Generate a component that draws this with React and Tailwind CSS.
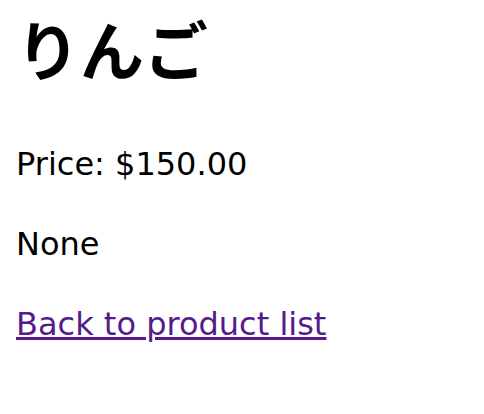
export default function App() {
  return (
    <div className="px-4 font-['DejaVu_Sans',sans-serif] text-black bg-white min-h-screen">
      <h1 className="text-[64px] leading-[94px] font-bold font-['Noto_Sans_CJK_JP','DejaVu_Sans',sans-serif]">
        りんご
      </h1>
      <div className="mt-[46px] flex flex-col gap-8 text-[32px] leading-[48px]">
        <p>Price: $150.00</p>
        <p>None</p>
        <p>
          <a href="#" className="text-[#551a8b] underline">
            Back to product list
          </a>
        </p>
      </div>
    </div>
  );
}
